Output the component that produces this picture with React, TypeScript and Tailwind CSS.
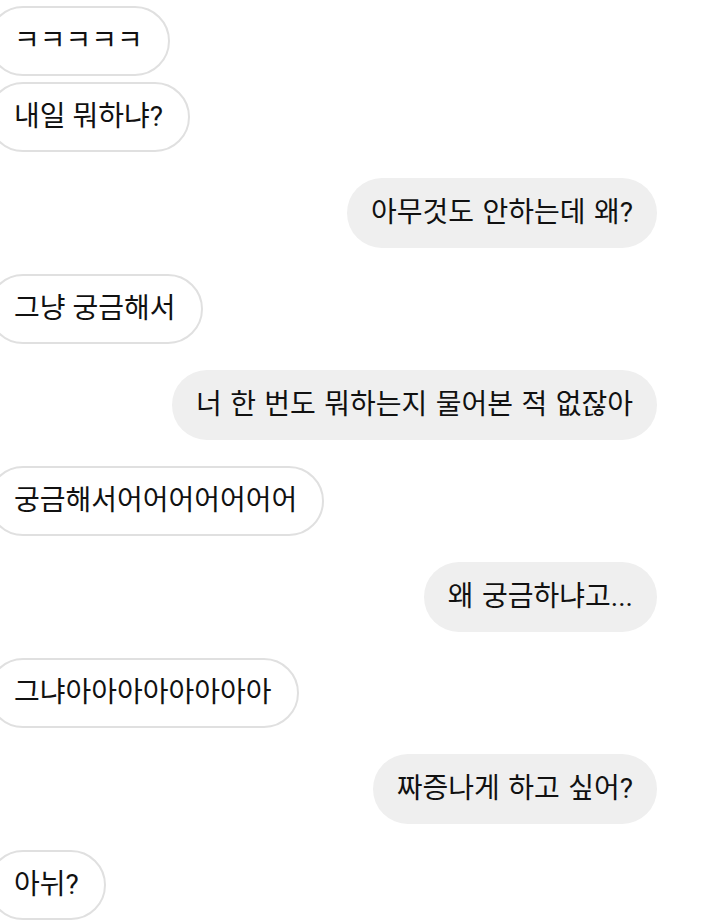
type Msg = { me: boolean; text: string };

const messages: Msg[] = [
  { me: false, text: "ㅋㅋㅋㅋㅋ" },
  { me: false, text: "내일 뭐하냐?" },
  { me: true, text: "아무것도 안하는데 왜?" },
  { me: false, text: "그냥 궁금해서" },
  { me: true, text: "너 한 번도 뭐하는지 물어본 적 없잖아" },
  { me: false, text: "궁금해서어어어어어어어" },
  { me: true, text: "왜 궁금하냐고..." },
  { me: false, text: "그냐아아아아아아아아" },
  { me: true, text: "짜증나게 하고 싶어?" },
  { me: false, text: "아뉘?" },
];

function Bubble({ msg, first, sameAsPrev }: { msg: Msg; first: boolean; sameAsPrev: boolean }) {
  const spacing = first ? "mt-[6px]" : sameAsPrev ? "mt-[6px]" : "mt-[26px]";
  if (msg.me) {
    return (
      <div className={`flex justify-end pr-[50px] ${spacing}`}>
        <div className="h-[70px] flex items-center px-6 rounded-full bg-[#efefef] text-[28px] text-[#111] whitespace-nowrap [word-spacing:1.5px]">
          {msg.text}
        </div>
      </div>
    );
  }
  return (
    <div className={`flex justify-start ${spacing}`}>
      <div className="h-[70px] -ml-[12px] flex items-center pl-6 pr-[25px] rounded-full border-2 border-[#e0e0e0] bg-white text-[28px] text-[#111] whitespace-nowrap">
        {msg.text}
      </div>
    </div>
  );
}

export default function App() {
  return (
    <div
      className="w-[707px] h-[922px] bg-white overflow-hidden"
      style={{ fontFamily: 'Roboto, "Noto Sans CJK KR", sans-serif' }}
    >
      {messages.map((m, i) => (
        <Bubble
          key={i}
          msg={m}
          first={i === 0}
          sameAsPrev={i > 0 && messages[i - 1].me === m.me}
        />
      ))}
    </div>
  );
}
